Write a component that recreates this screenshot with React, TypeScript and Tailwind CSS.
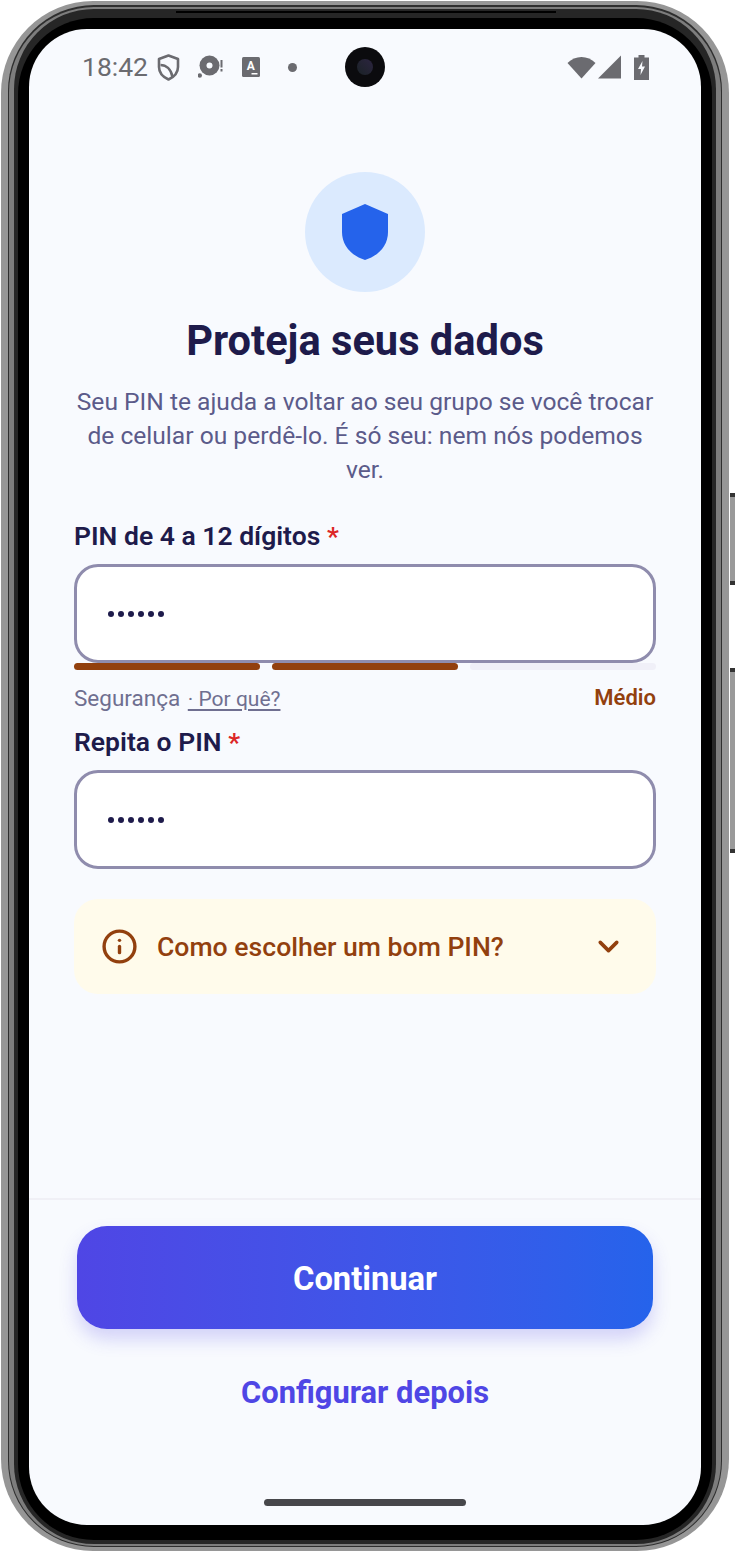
import React from 'react';
import { ChevronDown, Info } from 'lucide-react';

const StatusLeft = () => (
  <div className="flex items-center text-[#6b6b70]">
    <span className="text-[26.5px] leading-none">18:42</span>
    <svg className="ml-[9px]" width="23" height="27" viewBox="0 0 23 27" fill="none" stroke="currentColor" strokeWidth="2.6">
      <path d="M11.5 1.5 L21 5 V13 C21 19 17 23 11.5 25.5 C6 23 2 19 2 13 V5 Z" strokeLinejoin="round" />
      <path d="M3.5 11 C9 11 14 15 15.5 23" />
    </svg>
    <svg className="ml-[18px]" width="25" height="24" viewBox="0 0 25 24">
      <circle cx="11.5" cy="10.5" r="10" fill="currentColor" />
      <circle cx="11.5" cy="10.5" r="3" fill="#f8fafe" />
      <circle cx="1.8" cy="20.5" r="2.2" fill="currentColor" />
      <rect x="22.5" y="5" width="2" height="7.5" fill="currentColor" />
      <rect x="22.5" y="14" width="2" height="2.5" fill="currentColor" />
    </svg>
    <svg className="ml-[19px]" width="18" height="20" viewBox="0 0 18 20">
      <rect width="18" height="20" rx="1.5" fill="currentColor" />
      <text x="8.8" y="12.5" textAnchor="middle" fontSize="12" fontWeight="700" fontFamily="Roboto" fill="#fff">A</text>
      <rect x="9.5" y="16" width="6" height="1.5" fill="#fff" />
    </svg>
    <span className="ml-[28px] size-[9px] rounded-full bg-current" />
  </div>
);

const StatusRight = () => (
  <div className="flex items-center text-[#6b6b70]">
    <svg width="29" height="24" viewBox="0 0 29 24" fill="currentColor">
      <path d="M0.5 8 C8 0 21 0 28.5 8 L14.5 23.5 Z" />
    </svg>
    <svg className="ml-[2px]" width="23" height="24" viewBox="0 0 23 24" fill="currentColor">
      <path d="M0 23.5 L23 0.5 V23.5 Z" />
    </svg>
    <svg className="ml-[13px]" width="15" height="25" viewBox="0 0 15 25">
      <path d="M4.5 0 H10.5 V2.5 H15 V25 H0 V2.5 H4.5 Z" fill="currentColor" />
      <path d="M8.5 6 L4 14 H7 L6.5 20 L11 11.5 H8 Z" fill="#f8fafe" />
    </svg>
  </div>
);

const Label = ({ text }: { text: string }) => (
  <div className="text-[26.5px] leading-[32px] font-semibold text-[#1e1b4b]">
    {text} <span className="text-[#dc2626]">*</span>
  </div>
);

const PinInput = () => (
  <div className="h-[99px] rounded-[24px] border-[3px] border-[#8f8cad] bg-white flex items-center pl-[31px]">
    <div className="flex gap-[4px]">
      {[0, 1, 2, 3, 4, 5].map(i => (
        <span key={i} className="size-[6px] rounded-full bg-[#1e1b4b]" />
      ))}
    </div>
  </div>
);

const App = () => {
  return (
    <div className="relative w-[735px] h-[1553px] bg-white overflow-hidden font-['Roboto',sans-serif]">
      <div className="absolute right-0 top-[493px] w-[5px] h-[92px] bg-[#9a9a9a] border-y-[4px] border-[#333]" />
      <div className="absolute right-0 top-[668px] w-[5px] h-[185px] bg-[#9a9a9a] border-y-[4px] border-[#333]" />

      <div className="relative w-[728px] h-[1550px] mt-[1px] ml-[1px] rounded-[92px] pt-[4px] pb-[4px] px-[7px] bg-[#969696]">
        <div className="w-full h-full rounded-[86px] pt-[2px] pb-[1px] px-[1px] bg-[#2e2e2e]">
          <div className="w-full h-full rounded-[85px] py-[2px] px-[5px] bg-[#7d7d7d]">
            <div className="w-full h-full rounded-[80px] pt-[9px] pb-[4px] px-[4px] bg-[#262626]">
              <div className="w-full h-full rounded-[76px] pt-[11px] pb-[15px] px-[11px] bg-black">
                <div className="relative flex flex-col w-[672px] h-[1496px] rounded-[58px] bg-[#f8fafe] overflow-hidden">
                  <div className="h-[76px] flex items-center justify-between pl-[53px] pr-[52px]">
                    <StatusLeft />
                    <StatusRight />
                  </div>
                  <div className="absolute left-[316px] top-[18px] size-[40px] rounded-full bg-[#0b0b0e] flex items-center justify-center">
                    <span className="size-[16px] rounded-full bg-gradient-to-tr from-[#1a2226] to-[#2c2440]" />
                  </div>

                  <div className="flex-1 flex flex-col items-stretch px-[45px]">
                    <div className="mt-[67px] self-center size-[120px] rounded-full bg-[#dbeafe] flex items-center justify-center">
                      <svg width="46" height="56" viewBox="0 0 46 56" fill="#2563eb">
                        <path d="M23 0 L46 10 V28 C46 42 36 52 23 56 C10 52 0 42 0 28 V10 Z" />
                      </svg>
                    </div>
                    <h1 className="mt-[23px] text-center text-[41.6px] leading-[52px] font-bold text-[#1e1b4b]">Proteja seus dados</h1>
                    <p className="mt-[18px] text-center text-[24.6px] leading-[34px] text-[#5b5b8a]">
                      Seu PIN te ajuda a voltar ao seu grupo se você trocar de celular ou perdê-lo. É só seu: nem nós podemos ver.
                    </p>

                    <div className="mt-[33px]"><Label text="PIN de 4 a 12 dígitos" /></div>
                    <div className="mt-[12px]"><PinInput /></div>
                    <div className="flex gap-[12px]">
                      <div className="flex-1 h-[7px] rounded-full bg-[#92400e]" />
                      <div className="flex-1 h-[7px] rounded-full bg-[#92400e]" />
                      <div className="flex-1 h-[7px] rounded-full bg-[#f0f0f8]" />
                    </div>
                    <div className="mt-[14px] flex items-center justify-between h-[28px]">
                      <div className="text-[22.5px] leading-[28px] text-[#6f6f90]">
                        Segurança <span className="ml-[2px] text-[21px] underline underline-offset-[3px]">· Por quê?</span>
                      </div>
                      <div className="text-[22px] leading-[28px] font-semibold text-[#92400e]">Médio</div>
                    </div>

                    <div className="mt-[14px]"><Label text="Repita o PIN" /></div>
                    <div className="mt-[12px]"><PinInput /></div>

                    <div className="mt-[30px] h-[95px] rounded-[24px] bg-[#fffbeb] flex items-center pl-[27px] pr-[31px] text-[#92400e]">
                      <Info size={37} strokeWidth={2.2} />
                      <span className="ml-[19px] flex-1 text-[26.6px] font-medium">Como escolher um bom PIN?</span>
                      <ChevronDown size={33} strokeWidth={2.6} />
                    </div>
                  </div>

                  <div className="h-[327px] border-t-2 border-[#f0f0f6] px-[48px] pt-[26px] flex flex-col">
                    <div className="h-[103px] pt-[4px] rounded-[30px] bg-gradient-to-r from-[#4f46e5] to-[#2563eb] flex items-center justify-center text-white text-[32.7px] font-bold shadow-[0_10px_18px_rgba(79,70,229,0.22)]">
                      Continuar
                    </div>
                    <div className="mt-[45px] text-center text-[#4f46e5] text-[30.9px] leading-[38px] font-bold">Configurar depois</div>
                    <div className="mt-[87px] self-center w-[202px] h-[7px] rounded-full bg-[#47474b]" />
                  </div>
                </div>
              </div>
            </div>
          </div>
        </div>
        <div className="absolute top-[10px] left-[175px] w-[380px] h-[2px] bg-black" />
      </div>
    </div>
  );
};

export default App;
